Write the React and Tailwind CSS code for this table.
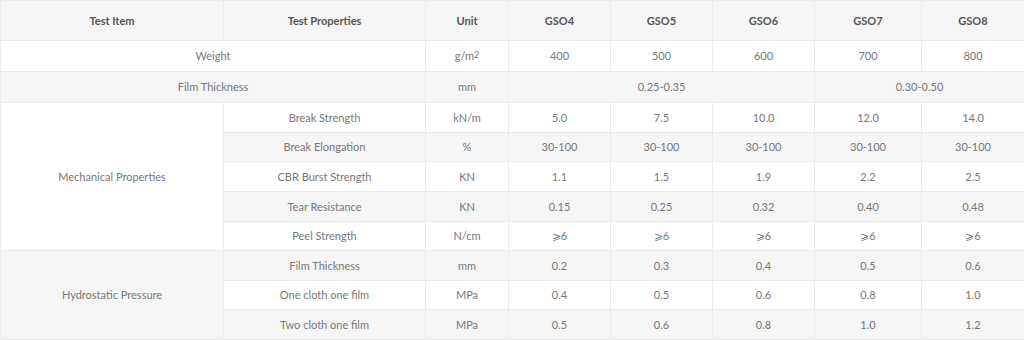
import React from "react";

const cols = [223, 202, 83, 102, 102, 102, 107, 103];

const td = "border border-[#ebebeb] text-center align-middle px-1 py-0";

export default function App() {
  const ge = "⩾6";
  const mech = [
    ["Break Strength", "kN/m", ["5.0", "7.5", "10.0", "12.0", "14.0"], "h-[30px]"],
    ["Break Elongation", "%", ["30-100", "30-100", "30-100", "30-100", "30-100"], "h-[29px]"],
    ["CBR Burst Strength", "KN", ["1.1", "1.5", "1.9", "2.2", "2.5"], "h-[30px]"],
    ["Tear Resistance", "KN", ["0.15", "0.25", "0.32", "0.40", "0.48"], "h-[30px]"],
    ["Peel Strength", "N/cm", [ge, ge, ge, ge, ge], "h-[29px]"],
  ];
  const hydro = [
    ["Film Thickness", "mm", ["0.2", "0.3", "0.4", "0.5", "0.6"], "h-[30px]"],
    ["One cloth one film", "MPa", ["0.4", "0.5", "0.6", "0.8", "1.0"], "h-[29px]"],
    ["Two cloth one film", "MPa", ["0.5", "0.6", "0.8", "1.0", "1.2"], "h-[30px]"],
  ];
  const bgOf = (i) => (i % 2 === 1 ? "bg-[#f5f5f5]" : "bg-white");
  return (
    <div className="w-[1024px] h-[340px] overflow-hidden bg-white" style={{ fontFamily: "Lato, 'Open Sans', sans-serif" }}>
      <table className="w-[1024px] table-fixed border-collapse text-[11px] leading-[14px] text-[#777]">
        <colgroup>
          {cols.map((w, i) => (
            <col key={i} style={{ width: w }} />
          ))}
        </colgroup>
        <thead>
          <tr className="h-[40px] bg-[#f5f5f5] text-[#555] font-bold">
            <th className={td}>Test Item</th>
            <th className={td}>Test Properties</th>
            <th className={td}>Unit</th>
            <th className={td}>GSO4</th>
            <th className={td}>GSO5</th>
            <th className={td}>GSO6</th>
            <th className={td}>GSO7</th>
            <th className={td}>GSO8</th>
          </tr>
        </thead>
        <tbody>
          <tr className="h-[31px] bg-white">
            <td className={td} colSpan={2}>Weight</td>
            <td className={td}>
              g/m<sup className="text-[9px] relative -top-[2px]">2</sup>
            </td>
            {["400", "500", "600", "700", "800"].map((v, i) => (
              <td key={i} className={td}>{v}</td>
            ))}
          </tr>
          <tr className="h-[31px] bg-[#f5f5f5]">
            <td className={td} colSpan={2}>Film Thickness</td>
            <td className={td}>mm</td>
            <td className={td} colSpan={3}>0.25-0.35</td>
            <td className={td} colSpan={2}>0.30-0.50</td>
          </tr>
          {mech.map(([name, unit, vals, h], i) => (
            <tr key={name} className={`${h} ${bgOf(i)}`}>
              {i === 0 && (
                <td className={`${td} bg-white`} rowSpan={5}>Mechanical Properties</td>
              )}
              <td className={td}>{name}</td>
              <td className={td}>{unit}</td>
              {vals.map((v, j) => (
                <td key={j} className={td}>{v}</td>
              ))}
            </tr>
          ))}
          {hydro.map(([name, unit, vals, h], i) => (
            <tr key={name} className={`${h} ${bgOf(i + 1)}`}>
              {i === 0 && (
                <td className={`${td} bg-[#f5f5f5]`} rowSpan={3}>Hydrostatic Pressure</td>
              )}
              <td className={td}>{name}</td>
              <td className={td}>{unit}</td>
              {vals.map((v, j) => (
                <td key={j} className={td}>{v}</td>
              ))}
            </tr>
          ))}
        </tbody>
      </table>
    </div>
  );
}
